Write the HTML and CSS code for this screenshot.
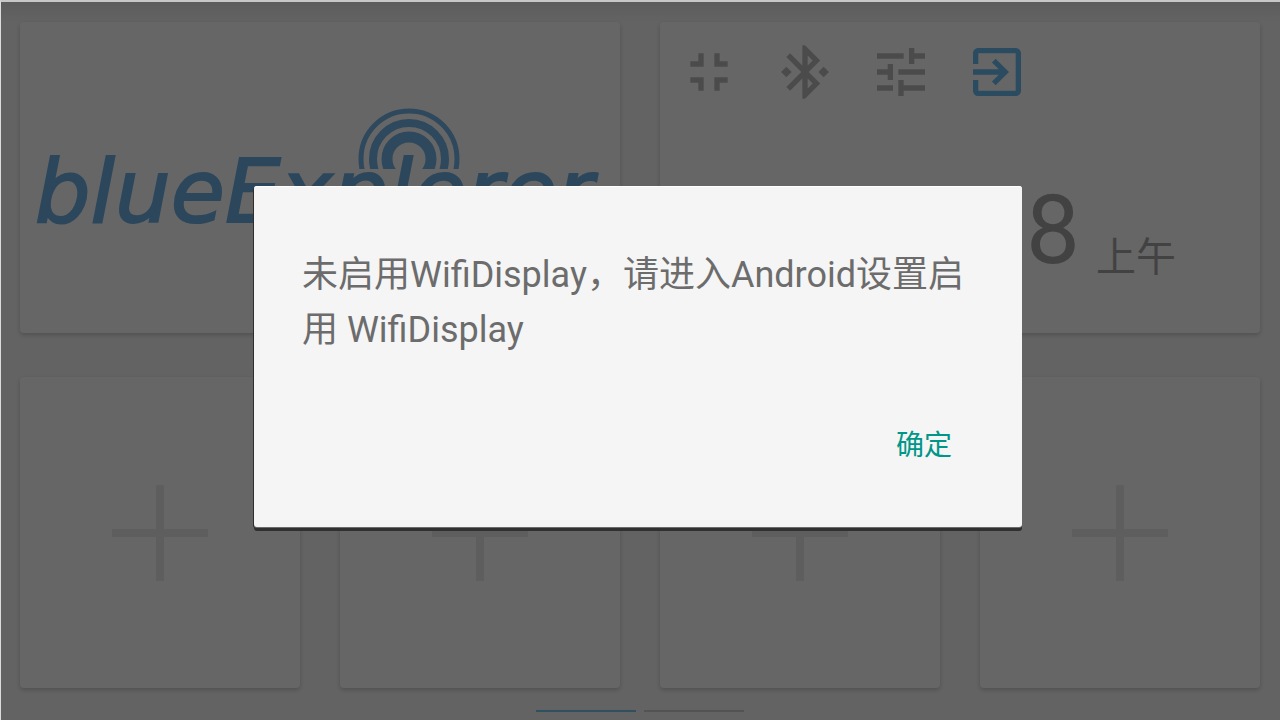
FILE: index.html
```html
<!DOCTYPE html>
<html lang="zh-CN">
<head>
<meta charset="utf-8">
<meta name="viewport" content="width=device-width, initial-scale=1">
<title>blueExplorer</title>
<link rel="stylesheet" href="styles.css">
</head>
<body>
<div class="screen">
  <main class="home">
    <section class="card card-wide brand">
      <div class="logo">
        <svg class="logo-waves" viewBox="0 0 102 61" aria-hidden="true">
          <circle cx="51" cy="51" r="48" stroke-width="5"/>
          <circle cx="51" cy="51" r="36" stroke-width="8"/>
          <path d="M37 61A22 22 0 0 1 51 29A22 22 0 0 1 65 61" stroke="none"/>
          <circle cx="51" cy="51" r="22" stroke-width="11"/>
        </svg>
        <span class="logo-name">blueExplorer</span>
      </div>
    </section>
    <section class="card card-wide status">
      <div class="toolbar">
        <button class="tool" type="button" aria-label="退出全屏"><svg viewBox="0 0 24 24"><path d="M5 16h3v3h2v-5H5v2zm3-8H5v2h5V5H8v3zm6 11h2v-3h3v-2h-5v5zm2-11V5h-2v5h5V8h-3z"/></svg></button>
        <button class="tool" type="button" aria-label="蓝牙"><svg viewBox="0 0 24 24"><path d="M7 12l-2-2-2 2 2 2 2-2zm10.71-4.29L12 2h-1v7.59L6.41 5 5 6.41 10.59 12 5 17.59 6.41 19 11 14.41V22h1l5.71-5.71-4.3-4.29 4.3-4.29zM13 5.83l1.88 1.88L13 9.59V5.83zm1.88 10.46L13 18.17v-3.76l1.88 1.88zM19 10l-2 2 2 2 2-2-2-2z"/></svg></button>
        <button class="tool" type="button" aria-label="设置"><svg viewBox="0 0 24 24"><path d="M3 17v2h6v-2H3zM3 5v2h10V5H3zm10 16v-2h8v-2h-8v-2h-2v6h2zM7 9v2H3v2h4v2h2V9H7zm14 4v-2H11v2h10zm-6-4h2V7h4V5h-4V3h-2v6z"/></svg></button>
        <button class="tool tool-active" type="button" aria-label="退出"><svg viewBox="0 0 24 24"><path d="M10.09 15.59L11.5 17l5-5-5-5-1.41 1.41L12.67 11H3v2h9.67l-2.58 2.59zM19 3H5c-1.11 0-2 .9-2 2v4h2V5h14v14H5v-4H3v4c0 1.1.89 2 2 2h14c1.1 0 2-.9 2-2V5c0-1.1-.9-2-2-2z"/></svg></button>
      </div>
      <div class="clock">
        <span class="clock-time">8</span>
        <span class="clock-period">上午</span>
      </div>
    </section>
    <button class="card slot" type="button" aria-label="添加"><svg viewBox="0 0 96 96"><path d="M44 0h8v44h44v8H52v44h-8V52H0v-8h44z"/></svg></button>
    <button class="card slot" type="button" aria-label="添加"><svg viewBox="0 0 96 96"><path d="M44 0h8v44h44v8H52v44h-8V52H0v-8h44z"/></svg></button>
    <button class="card slot" type="button" aria-label="添加"><svg viewBox="0 0 96 96"><path d="M44 0h8v44h44v8H52v44h-8V52H0v-8h44z"/></svg></button>
    <button class="card slot" type="button" aria-label="添加"><svg viewBox="0 0 96 96"><path d="M44 0h8v44h44v8H52v44h-8V52H0v-8h44z"/></svg></button>
  </main>
  <div class="pager"><span class="page page-current"></span><span class="page"></span></div>

  <div class="scrim">
    <div class="dialog" role="alertdialog" aria-modal="true" aria-describedby="message">
      <p class="message" id="message">未启用WifiDisplay，请进入Android设置启用 WifiDisplay</p>
      <button class="confirm" type="button">确定</button>
    </div>
  </div>
</div>
</body>
</html>
```
FILE: styles.css
```css
* {
  box-sizing: border-box;
}

body {
  margin: 0;
  font-family: Roboto, "Noto Sans CJK SC", sans-serif;
}

button {
  margin: 0;
  padding: 0;
  border: 0;
  background: none;
  font: inherit;
}

.screen {
  position: relative;
  display: flex;
  flex-direction: column;
  min-height: 100vh;
  border-top: 2px solid #c6c8c8;
  border-left: 1px solid #dcdcdc;
  background: linear-gradient(#e6e6e6, #f8f8f8 20px);
}

.home {
  flex: 1;
  display: grid;
  grid-template-columns: repeat(4, 1fr);
  grid-template-rows: 1fr 1fr;
  gap: 44px 40px;
  padding: 20px 20px 0 19px;
}

.card {
  border-radius: 4px;
  background: #fff;
  box-shadow: 0 2px 5px rgba(0, 0, 0, 0.2);
}

.card-wide {
  grid-column: span 2;
}

.brand {
  display: flex;
  align-items: center;
  justify-content: center;
}

.logo {
  position: relative;
  padding: 28px 12px 0 0;
  color: #6eb2e6;
}

.logo-name {
  font: italic 88px/104px "DejaVu Sans", sans-serif;
  -webkit-text-stroke: 2px currentColor;
}

.logo-waves {
  position: absolute;
  top: -4px;
  left: 323px;
  width: 102px;
  fill: none;
  stroke: #73b5e8;
}

.status {
  display: flex;
  flex-direction: column;
}

.toolbar {
  display: flex;
  gap: 32px;
  padding: 18px 17px 0;
}

.tool {
  width: 64px;
  height: 64px;
  color: #bcbcbc;
}

.tool svg {
  display: block;
  fill: currentColor;
}

.tool-active {
  color: #6cbef0;
}

.clock {
  flex: 1;
  display: flex;
  align-items: center;
  justify-content: flex-end;
  gap: 16px;
  padding: 22px 84px 0;
  color: #a6a6a6;
}

.clock-time {
  font-size: 96px;
  font-weight: 400;
  line-height: 96px;
}

.clock-period {
  padding-top: 48px;
  font-family: "Noto Sans CJK SC", sans-serif;
  font-size: 40px;
  line-height: 48px;
}

.slot {
  display: flex;
  align-items: center;
  justify-content: center;
}

.slot svg {
  width: 96px;
  fill: #ececec;
}

.pager {
  display: flex;
  align-items: center;
  justify-content: center;
  gap: 8px;
  height: 32px;
  padding: 14px 1px 0 0;
}

.page {
  width: 100px;
  height: 2px;
  background: #d0d0d0;
}

.page-current {
  background: #7cc8ee;
}

.scrim {
  position: absolute;
  inset: 0;
  display: flex;
  align-items: center;
  justify-content: center;
  padding: 0 5px 9px 0;
  background: rgba(0, 0, 0, 0.6);
}

.dialog {
  display: flex;
  flex-direction: column;
  align-items: flex-end;
  width: 768px;
  max-width: 100%;
  padding: 62px 48px 57px;
  border-radius: 3px;
  background: #f5f5f5;
  box-shadow: inset 0 1px 0 #fff, 0 1px 0 #6b6b6b, -1px 1px 0 #2e2e2e, 0 4px 0 #303030;
}

.message {
  align-self: stretch;
  margin: 0;
  color: #6c6c6c;
  font-size: 36px;
  line-height: 55px;
}

.confirm {
  height: 48px;
  margin-top: 64px;
  padding: 0 22px;
  color: #009688;
  font-size: 28px;
  line-height: 48px;
}
```
